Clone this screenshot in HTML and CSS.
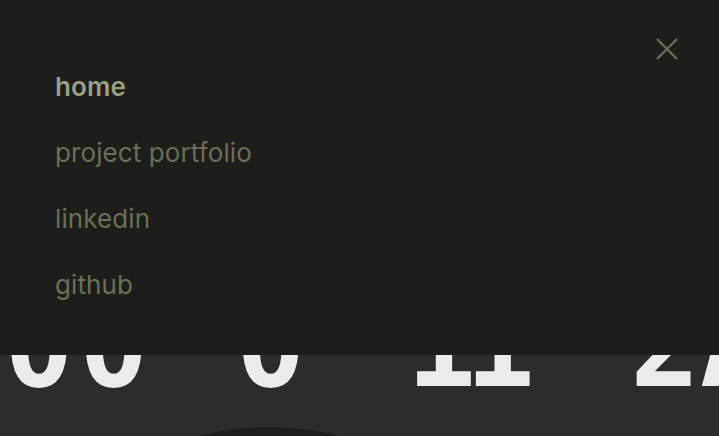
FILE: index.html
```html
<!DOCTYPE html>
<html lang="en">
<head>
<meta charset="utf-8">
<link rel="stylesheet" href="styles.css">
</head>
<body>
<main class="page">
  <h1 class="hero-title">
    <span class="hero-group g1">00</span>
    <span class="hero-group g2">0</span>
    <span class="hero-group g3">11</span>
    <span class="hero-group g4">2A</span>
  </h1>
  <div class="hero-circle"></div>
</main>
<nav class="menu-overlay">
  <button class="menu-close" aria-label="close">
    <svg width="24" height="24" viewBox="0 0 24 24"><path d="M2 2 L22 22 M22 2 L2 22" stroke="#6b6f55" stroke-width="2.3" fill="none"/></svg>
  </button>
  <ul class="menu-list">
    <li><a class="menu-link active" href="#">home</a></li>
    <li><a class="menu-link" href="#">project portfolio</a></li>
    <li><a class="menu-link" href="#">linkedin</a></li>
    <li><a class="menu-link" href="#">github</a></li>
  </ul>
</nav>
</body>
</html>
```
FILE: styles.css
```css
html, body {
  margin: 0;
  padding: 0;
  height: 100%;
  overflow: hidden;
}
body {
  background: #2b2d2a;
  font-family: "Inter", "DejaVu Sans", sans-serif;
}
.page {
  padding-top: 288px;
}
.hero-title {
  margin: 0;
  padding-left: 4px;
  display: flex;
  font-family: "DejaVu Sans Mono", monospace;
  font-weight: bold;
  font-size: 116px;
  line-height: 116px;
  height: 116px;
  color: #ebece7;
  white-space: nowrap;
}
.hero-group {
  flex: none;
}
.g1 { letter-spacing: 5px; }
.g2 { margin-left: 82px; }
.g3 { margin-left: 101px; letter-spacing: -11px; }
.g4 { margin-left: 106px; }
.hero-circle {
  width: 554px;
  height: 554px;
  border-radius: 50%;
  background: #1e1f1d;
  margin-left: -7px;
  margin-top: 23px;
}
.menu-overlay {
  position: fixed;
  top: 0;
  left: 0;
  right: 0;
  height: 355px;
  background: #1d1d1b;
}
.menu-close {
  position: absolute;
  top: 37px;
  right: 40px;
  padding: 0;
  border: 0;
  background: none;
  width: 24px;
  height: 24px;
}
.menu-list {
  list-style: none;
  margin: 0;
  padding: 69px 0 0 55px;
  display: flex;
  flex-direction: column;
  gap: 30px;
}
.menu-link {
  display: block;
  font-size: 26px;
  line-height: 36px;
  color: #6b6f55;
  text-decoration: none;
  letter-spacing: 0.1px;
}
.menu-link.active {
  color: #9a9f86;
  font-weight: 600;
}
```
